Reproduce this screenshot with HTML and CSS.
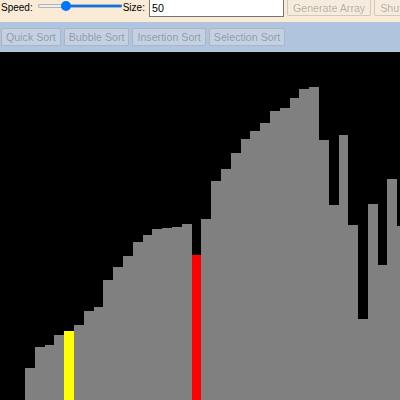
FILE: index.html
```html
<!DOCTYPE html>
<html>
<head>
<meta charset="utf-8">
<title>Sorting Visualizer</title>
<link rel="stylesheet" href="styles.css">
</head>
<body>
<div class="topbar">
  <label class="lbl lbl-speed">Speed:</label>
  <input class="speed" type="range" min="0" max="100" value="31">
  <label class="lbl lbl-size">Size:</label>
  <input class="size" type="text" value="50">
  <button class="btn btn-top" disabled>Generate Array</button>
  <button class="btn btn-top" disabled>Shuffle</button>
</div>
<div class="algobar">
  <button class="btn" disabled>Quick Sort</button>
  <button class="btn" disabled>Bubble Sort</button>
  <button class="btn" disabled>Insertion Sort</button>
  <button class="btn" disabled>Selection Sort</button>
</div>
<div class="chart">
  <div class="bar" style="height:32px"></div>
  <div class="bar" style="height:53px"></div>
  <div class="bar" style="height:55px"></div>
  <div class="bar" style="height:65px"></div>
  <div class="bar bar-compare" style="height:69px"></div>
  <div class="bar" style="height:75px"></div>
  <div class="bar" style="height:89px"></div>
  <div class="bar" style="height:93px"></div>
  <div class="bar" style="height:120px"></div>
  <div class="bar" style="height:133px"></div>
  <div class="bar" style="height:144px"></div>
  <div class="bar" style="height:158px"></div>
  <div class="bar" style="height:165px"></div>
  <div class="bar" style="height:171px"></div>
  <div class="bar" style="height:172px"></div>
  <div class="bar" style="height:173px"></div>
  <div class="bar" style="height:176px"></div>
  <div class="bar bar-active" style="height:145px"></div>
  <div class="bar" style="height:181px"></div>
  <div class="bar" style="height:219px"></div>
  <div class="bar" style="height:231px"></div>
  <div class="bar" style="height:247px"></div>
  <div class="bar" style="height:261px"></div>
  <div class="bar" style="height:269px"></div>
  <div class="bar" style="height:277px"></div>
  <div class="bar" style="height:289px"></div>
  <div class="bar" style="height:292px"></div>
  <div class="bar" style="height:302px"></div>
  <div class="bar" style="height:311px"></div>
  <div class="bar" style="height:313px"></div>
  <div class="bar" style="height:260px"></div>
  <div class="bar" style="height:195px"></div>
  <div class="bar" style="height:265px"></div>
  <div class="bar" style="height:175px"></div>
  <div class="bar" style="height:81px"></div>
  <div class="bar" style="height:196px"></div>
  <div class="bar" style="height:135px"></div>
  <div class="bar" style="height:221px"></div>
  <div class="bar" style="height:174px"></div>
  <div class="bar" style="height:120px"></div>
  <div class="bar" style="height:90px"></div>
  <div class="bar" style="height:200px"></div>
  <div class="bar" style="height:60px"></div>
  <div class="bar" style="height:150px"></div>
  <div class="bar" style="height:230px"></div>
  <div class="bar" style="height:110px"></div>
  <div class="bar" style="height:40px"></div>
  <div class="bar" style="height:180px"></div>
  <div class="bar" style="height:140px"></div>
  <div class="bar" style="height:70px"></div>
</div>
</body>
</html>
```
FILE: styles.css
```css
html, body {
  margin: 0;
  padding: 0;
  overflow: hidden;
  background: #000;
}
body {
  font-family: "Liberation Sans", Arial, sans-serif;
  width: 400px;
}
.topbar {
  display: flex;
  align-items: center;
  height: 15px;
  padding-bottom: 7px;
  background: #faebd7;
  white-space: nowrap;
}
.lbl {
  font-size: 10px;
  line-height: 12px;
  color: #000;
  flex-shrink: 0;
}
.lbl-speed { margin-left: 1px; }
.lbl-size { margin-left: 1px; }
.speed {
  -webkit-appearance: none;
  appearance: none;
  flex-shrink: 0;
  width: 84px;
  height: 12px;
  margin: 0 0 3px 5px;
  padding: 0;
  background: transparent;
}
.speed::-webkit-slider-runnable-track {
  height: 4px;
  border-radius: 3px;
  border: 1px solid #b3b3b3;
  border-right-color: #0075ff;
  background: linear-gradient(to right, #efefef 0 30%, #0075ff 30% 100%);
}
.speed::-webkit-slider-thumb {
  -webkit-appearance: none;
  width: 10px;
  height: 10px;
  margin-top: -4px;
  border-radius: 50%;
  background: #0075ff;
  border: none;
}
.size {
  flex-shrink: 0;
  box-sizing: border-box;
  width: 135px;
  height: 19px;
  margin-left: 4px;
  padding: 0 2px;
  border: 1px solid #767676;
  font-family: "Liberation Sans", Arial, sans-serif;
  font-size: 10.7px;
  color: #000;
  background: #fff;
}
.btn {
  flex-shrink: 0;
  box-sizing: border-box;
  height: 18px;
  padding: 0 4px;
  font-family: "Liberation Sans", Arial, sans-serif;
  font-size: 10.67px;
  line-height: 12px;
  background: rgba(239, 239, 239, 0.3);
  border: 1px solid rgba(118, 118, 118, 0.3);
  color: rgba(16, 16, 16, 0.3);
  border-radius: 2px;
  white-space: nowrap;
}
.btn-top {
  height: 17px;
  margin-left: 3px;
  padding: 0 5px;
}
.algobar {
  display: flex;
  gap: 3px;
  align-items: center;
  height: 30px;
  padding-left: 1px;
  background: #b0c4de;
}
.chart {
  display: flex;
  align-items: flex-end;
  height: 348px;
  padding-left: 25px;
  background: #000;
}
.bar {
  flex: 0 0 9.8px;
  width: 9.8px;
  background: #808080;
}
.bar-compare { background: #ffff00; }
.bar-active { background: #ff0000; }
```
